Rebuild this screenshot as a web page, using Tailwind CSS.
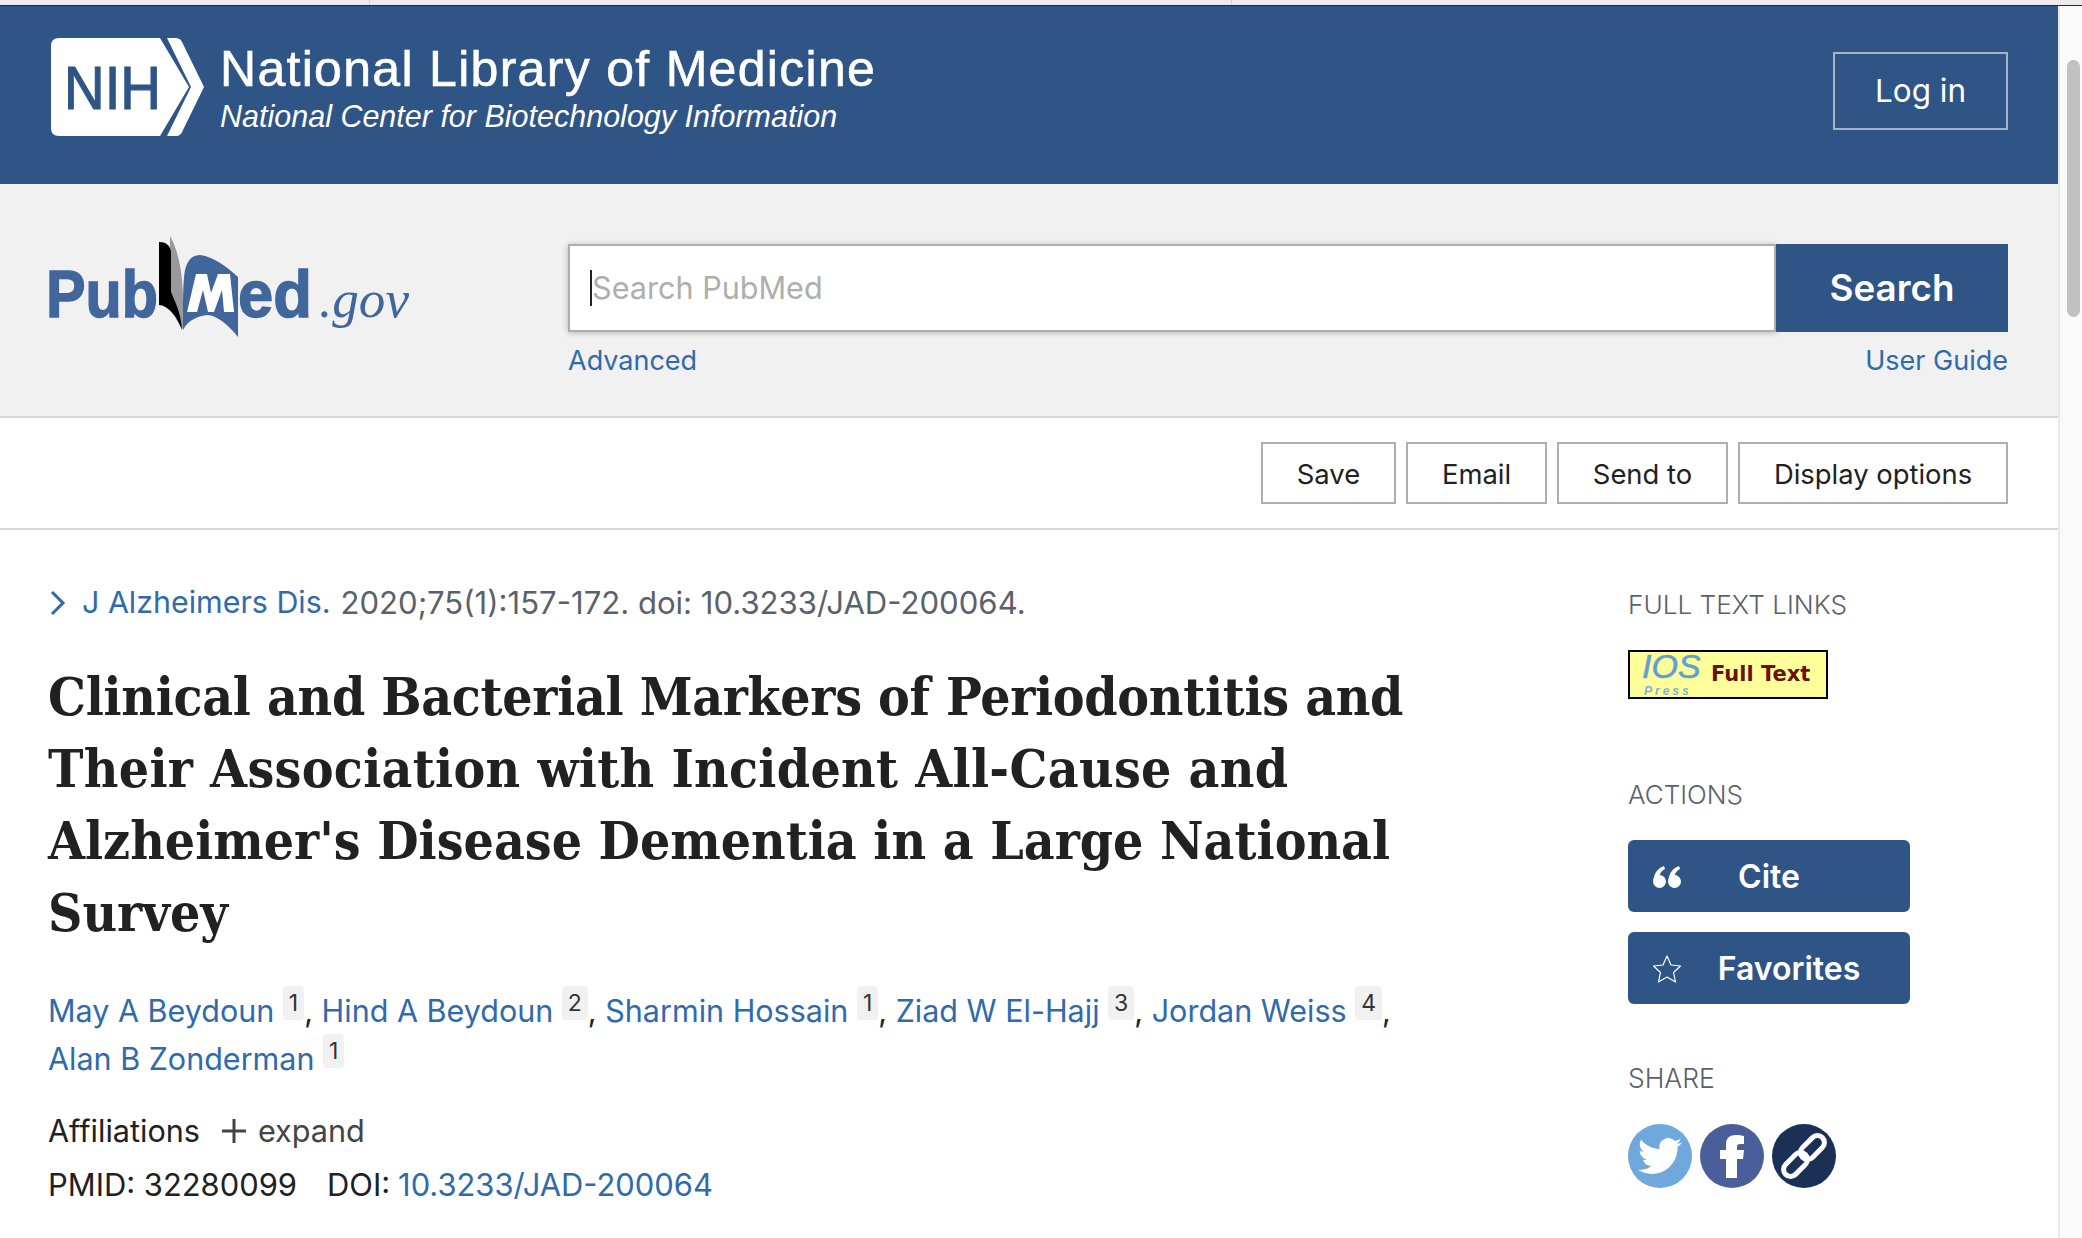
<!DOCTYPE html>
<html lang="en">
  <head>
    <meta charset="UTF-8" />
    <title>PubMed</title>
    <script src="https://cdn.jsdelivr.net/npm/@tailwindcss/browser@4"></script>
  </head>
  <body class="h-[1238px] overflow-hidden bg-white font-['Inter',sans-serif]">
    <!-- browser strip above the page -->
    <div class="flex h-[6px] border-b border-[#12294b] bg-[#eee9ee]">
      <div class="w-[370px] border-r border-[#d8d4d8]"></div>
      <div class="w-[862px] border-r border-[#d8d4d8]"></div>
    </div>

    <div class="flex h-[1232px]">
      <main class="w-[2060px] shrink-0 border-r-2 border-[#e8e8e8]">
        <!-- NIH banner -->
        <header class="flex h-[178px] items-start justify-between bg-[#2f5586] pr-[50px] pl-[51px]">
          <div class="mt-[32px] flex items-start">
            <svg width="153" height="98" viewBox="0 0 153 98">
              <path d="M109 0L138 49L109 98H8Q0 98 0 90V8Q0 0 8 0Z" fill="#fff" />
              <path d="M116 0H125Q130 0 132 6L153 49L132 92Q130 98 125 98H116L140 49Z" fill="#fff" />
              <text x="13" y="71" fill="#2f5586" stroke="#2f5586" stroke-width="1.2" font-family="Liberation Sans" font-size="61" textLength="97" lengthAdjust="spacingAndGlyphs">NIH</text>
            </svg>
            <div class="mt-[3px] ml-[16px] text-white">
              <div class="font-['Liberation_Sans',sans-serif] text-[50px] leading-[57px] tracking-[1.3px] [-webkit-text-stroke:0.6px_#fff]">National Library of Medicine</div>
              <div class="font-['Liberation_Sans',sans-serif] text-[30.5px] leading-[36px] italic">National Center for Biotechnology Information</div>
            </div>
          </div>
          <a class="mt-[46px] flex h-[78px] w-[175px] items-center justify-center border-2 border-[#a3b5cc] text-[31.5px] text-white">Log in</a>
        </header>

        <!-- search band -->
        <section class="flex h-[234px] border-b-2 border-[#d9d9d9] bg-[#f1f1f1] pr-[50px]">
          <svg class="mt-[48px] ml-[44px] shrink-0" width="381" height="112" viewBox="44 230 381 112">
            <text x="46" y="315" fill="#40669c" stroke="#40669c" stroke-width="1.4" font-family="Liberation Sans" font-weight="700" font-size="67" textLength="112" lengthAdjust="spacingAndGlyphs">Pub</text>
            <path d="M170 234C178 248 183 270 183 300V328L170 296Z" fill="#9a9a9a" />
            <path d="M159 240C166 240 170 243 171 250V290C175 300 181 310 182 328C177 316 170 304 159 303Z" fill="#000" />
            <path d="M183 328C183 295 183 280 185 268C188 256 194 253 200 253C214 255 226 264 238 275V335C226 320 216 314 208 313C198 314 188 318 183 328Z" fill="#40669c" />
            <path d="M187 310L196 272H207L211 291L218 272H230L234 310H224L222 288L214 310H208L203 288L197 310Z" fill="#fff" />
            <text x="238" y="315" fill="#40669c" stroke="#40669c" stroke-width="1.4" font-family="Liberation Sans" font-weight="700" font-size="67" textLength="74" lengthAdjust="spacingAndGlyphs">ed</text>
            <text x="319" y="315" fill="#40669c" font-family="Liberation Serif" font-style="italic" font-size="52" textLength="90" lengthAdjust="spacingAndGlyphs">.gov</text>
          </svg>
          <div class="mt-[60px] ml-[143px] flex-1">
            <div class="flex h-[88px]">
              <div class="flex flex-1 items-center border-2 border-[#aeaeae] bg-white pl-[20px] text-[30.6px] text-[#aeaeae] shadow-[0_1px_6px_rgba(0,0,0,0.25)]">
                <span class="h-[36px] w-[2px] bg-[#222]"></span>Search PubMed
              </div>
              <button class="w-[232px] bg-[#2f5586] text-[36.8px] font-semibold text-white">Search</button>
            </div>
            <div class="mt-[13px] flex justify-between text-[27px] leading-[32px] text-[#2f6aad]">
              <a>Advanced</a>
              <a>User Guide</a>
            </div>
          </div>
        </section>

        <!-- action toolbar -->
        <nav class="flex h-[112px] items-center justify-end gap-[10px] border-b-2 border-[#d9d9d9] pr-[50px] text-[27.4px] text-[#212121]">
          <button class="h-[62px] w-[135px] border-2 border-[#aeaeae] pt-[3px]">Save</button>
          <button class="h-[62px] w-[141px] border-2 border-[#aeaeae] pt-[3px]">Email</button>
          <button class="h-[62px] w-[171px] border-2 border-[#aeaeae] pt-[3px]">Send to</button>
          <button class="h-[62px] w-[270px] border-2 border-[#aeaeae] pt-[3px]">Display options</button>
        </nav>

        <div class="flex">
          <!-- article -->
          <article class="w-[1628px] shrink-0 pt-[53px] pl-[48px]">
            <div class="flex h-[40px] items-center text-[31.1px] text-[#5b616b]">
              <svg class="mr-[14px]" width="20" height="26" viewBox="0 0 20 26" fill="none" stroke="#2f6aad" stroke-width="3">
                <path d="M4 2L15 13L4 24" />
              </svg>
              <a class="mr-[10px] text-[30.4px] text-[#2f6aad]">J Alzheimers Dis.</a>2020;75(1):157-172. doi: 10.3233/JAD-200064.
            </div>
            <h1 class="mt-[37px] w-[1400px] font-['DejaVu_Serif',serif] text-[53px] leading-[72px] font-bold text-[#212121] [font-stretch:condensed]">
              <span class="block tracking-[-0.3px]">Clinical and Bacterial Markers of Periodontitis and</span>
              <span class="block tracking-[0.3px]">Their Association with Incident All-Cause and</span>
              <span class="block">Alzheimer's Disease Dementia in a Large National</span>
              <span class="block">Survey</span>
            </h1>
            <div class="mt-[39px] w-[1400px] text-[30.5px] leading-[48px] text-[#212121]">
              <a class="text-[#2f6aad]">May A Beydoun</a>
              <sup class="rounded-[4px] bg-[#f1f1f1] px-[6px] py-[3px] text-[23px] text-[#333]">1</sup>,
              <a class="text-[#2f6aad]">Hind A Beydoun</a>
              <sup class="rounded-[4px] bg-[#f1f1f1] px-[6px] py-[3px] text-[23px] text-[#333]">2</sup>,
              <a class="text-[#2f6aad]">Sharmin Hossain</a>
              <sup class="rounded-[4px] bg-[#f1f1f1] px-[6px] py-[3px] text-[23px] text-[#333]">1</sup>,
              <a class="text-[#2f6aad]">Ziad W El-Hajj</a>
              <sup class="rounded-[4px] bg-[#f1f1f1] px-[6px] py-[3px] text-[23px] text-[#333]">3</sup>,
              <a class="text-[#2f6aad]">Jordan Weiss</a>
              <sup class="rounded-[4px] bg-[#f1f1f1] px-[6px] py-[3px] text-[23px] text-[#333]">4</sup>,
              <br />
              <a class="text-[#2f6aad]">Alan B Zonderman</a>
              <sup class="rounded-[4px] bg-[#f1f1f1] px-[6px] py-[3px] text-[23px] text-[#333]">1</sup>
            </div>
            <div class="mt-[28px] flex h-[40px] items-center text-[30.6px] text-[#212121]">
              Affiliations
              <svg class="mr-[12px] ml-[22px]" width="24" height="24" viewBox="0 0 24 24" stroke="#444" stroke-width="3">
                <path d="M12 0V24M0 12H24" />
              </svg>
              <span class="text-[#444]">expand</span>
            </div>
            <div class="mt-[14px] flex h-[40px] items-center text-[30.9px] text-[#212121]">
              PMID: 32280099
              <span class="ml-[30px]">DOI:</span>
              <a class="ml-[8px] text-[#2f6aad]">10.3233/JAD-200064</a>
            </div>
          </article>

          <!-- sidebar -->
          <aside class="flex-1 pt-[59px]">
            <div class="h-[32px] text-[26.2px] leading-[32px] font-light text-[#5b616b]">FULL TEXT LINKS</div>
            <a class="relative mt-[29px] flex h-[49px] w-[200px] items-center border-2 border-black bg-[#ffff99]">
              <span class="absolute top-0 left-[12px] font-['Liberation_Sans',sans-serif] text-[34px] leading-[28px] text-[#5f9fd4] italic [-webkit-text-stroke:0.6px_#5f9fd4]">IOS</span>
              <span class="absolute top-[33px] left-[14px] font-['Liberation_Sans',sans-serif] text-[12px] leading-[12px] font-bold tracking-[3px] text-[#7fb0dd] italic">Press</span>
              <span class="ml-[81px] font-['DejaVu_Sans',sans-serif] text-[21px] font-bold text-[#6b0f0f]">Full Text</span>
            </a>
            <div class="mt-[80px] h-[32px] text-[26px] leading-[32px] font-light text-[#5b616b]">ACTIONS</div>
            <button class="relative mt-[29px] flex h-[72px] w-[282px] items-center justify-center rounded-[6px] bg-[#2f5586] pt-[2px] text-[32px] font-semibold text-white">
              <svg class="absolute left-[25px]" width="28" height="22" viewBox="0 0 28 22" fill="#fff">
                <circle cx="6.5" cy="15.5" r="6.5" />
                <path d="M0.5 14C1 7 5 2 11 0L12 3C8 5 6.5 8 6.5 12Z" />
                <circle cx="21.5" cy="15.5" r="6.5" />
                <path d="M15.5 14C16 7 20 2 26 0L27 3C23 5 21.5 8 21.5 12Z" />
              </svg>
              Cite
            </button>
            <button class="relative mt-[20px] flex h-[72px] w-[282px] items-center justify-center rounded-[6px] bg-[#2f5586] pt-[2px] pl-[40px] text-[32px] font-semibold text-white">
              <svg class="absolute left-[24px]" width="30" height="28" viewBox="0 0 30 28" fill="none" stroke="#fff" stroke-width="1.2" stroke-linejoin="round">
                <path d="M15 1L19 10L28.5 11L21.5 17.5L23.5 27L15 22L6.5 27L8.5 17.5L1.5 11L11 10Z" />
              </svg>
              Favorites
            </button>
            <div class="mt-[58px] h-[32px] text-[26.5px] leading-[32px] font-light text-[#5b616b]">SHARE</div>
            <div class="mt-[30px] flex gap-[8px]">
              <span class="flex h-[64px] w-[64px] items-center justify-center rounded-full bg-[#6fa8dc]">
                <svg width="44" height="44" viewBox="0 0 24 24" fill="#fff">
                  <path d="M23.953 4.57a10 10 0 01-2.825.775 4.958 4.958 0 002.163-2.723c-.951.555-2.005.959-3.127 1.184a4.92 4.92 0 00-8.384 4.482C7.69 8.095 4.067 6.13 1.64 3.162a4.822 4.822 0 00-.666 2.475c0 1.71.87 3.213 2.188 4.096a4.904 4.904 0 01-2.228-.616v.06a4.923 4.923 0 003.946 4.827 4.996 4.996 0 01-2.212.085 4.936 4.936 0 004.604 3.417 9.867 9.867 0 01-6.102 2.105c-.39 0-.779-.023-1.17-.067a13.995 13.995 0 007.557 2.209c9.053 0 13.998-7.496 13.998-13.985 0-.21 0-.42-.015-.63A9.935 9.935 0 0024 4.59z" />
                </svg>
              </span>
              <span class="flex h-[64px] w-[64px] items-center justify-center rounded-full bg-[#4a5f9a]">
                <svg width="64" height="64" viewBox="0 0 64 64" fill="#fff">
                  <path d="M26 54V35H20V26H26V20C26 14 30 11 36 11C39 11 42 11.500 44 12V20H40C38 20 37 21 37 23V26H44L43 35H37V54Z" />
                </svg>
              </span>
              <span class="flex h-[64px] w-[64px] items-center justify-center rounded-full bg-[#1a3054]">
                <svg width="64" height="64" viewBox="0 0 64 64" fill="none" stroke="#fff" stroke-width="5">
                  <g transform="rotate(-45 32 32)">
                    <rect x="6" y="25" width="28" height="14" rx="7" />
                    <rect x="30" y="25" width="28" height="14" rx="7" />
                  </g>
                </svg>
              </span>
            </div>
          </aside>
        </div>
      </main>

      <!-- browser scrollbar -->
      <div class="flex-1 bg-[#fafafa] pt-[54px] pl-[7px]">
        <div class="h-[257px] w-[13px] rounded-full bg-[#c1c1c1]"></div>
      </div>
    </div>
  </body>
</html>
